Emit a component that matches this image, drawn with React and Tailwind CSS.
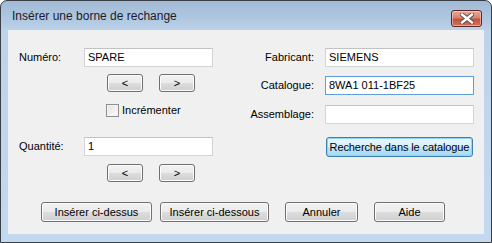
import React from "react";

const font = { fontFamily: '"Liberation Sans", Arial, sans-serif' };

function Btn({ w, h = 20, children, className = "" }) {
  return (
    <div
      className={`flex items-center justify-center rounded-[3px] border border-[#707070] bg-[linear-gradient(to_bottom,#f2f2f2_0%,#ebebeb_50%,#dddddd_51%,#cfcfcf_100%)] text-[11px] text-black shadow-[inset_0_0_0_1px_#fcfcfc] ${w} ${h === 18 ? "h-[18px]" : "h-[20px]"} ${className}`}
    >
      {children}
    </div>
  );
}

function Input({ value, blue }) {
  return (
    <div
      className={`flex h-[19px] items-center border bg-white pl-[3px] text-[11px] text-black ${
        blue ? "border-[#5e9fdc]" : "border-[#d4d4d4] border-t-[#c2c2c2]"
      }`}
    >
      {value}
    </div>
  );
}

export default function App() {
  return (
    <div className="h-[243px] w-[492px] bg-white" style={font}>
      <div className="flex h-[243px] w-[492px] flex-col rounded-t-[7px] border border-[#3a3f46] bg-[linear-gradient(to_bottom,#a2bad5_0px,#b2c9e2_20px,#bcd3ea_30px,#c3d9ef_100%)]">
        {/* title bar */}
        <div className="flex h-[29px] items-start justify-between pl-[11px] pr-[9px]">
          <div
            className="pt-[8px] text-[12px] leading-[15px] text-[#1b1b2b]"
            style={{ fontFamily: '"Liberation Sans", Arial, sans-serif' }}
          >
            Insérer une borne de rechange
          </div>
          <div className="mt-[9px] flex h-[17px] w-[31px] items-center justify-center rounded-[3px] border border-[#5a2a26] bg-[linear-gradient(to_bottom,#e9a99b_0%,#d88270_45%,#c5513c_55%,#d2735c_100%)] shadow-[inset_0_0_0_1px_rgba(255,220,210,0.5)]">
            <svg width="14" height="11" viewBox="0 0 14 11">
              <path
                d="M2 1.5 L12 9.5 M12 1.5 L2 9.5"
                stroke="#4a4a4a"
                strokeWidth="4.2"
                strokeLinecap="square"
              />
              <path
                d="M2 1.5 L12 9.5 M12 1.5 L2 9.5"
                stroke="#ffffff"
                strokeWidth="2.4"
                strokeLinecap="square"
              />
            </svg>
          </div>
        </div>
        {/* client */}
        <div className="mx-[7px] flex h-[204px] flex-col bg-[#f0f0f0] pt-[18px]">
          <div className="flex items-start">
            {/* left column */}
            <div className="flex w-[240px] flex-col pl-[11px]">
              <div className="flex items-center">
                <div className="w-[65px] text-[11px] text-black">Numéro:</div>
                <div className="w-[129px]">
                  <Input value="SPARE" />
                </div>
              </div>
              <div className="ml-[88px] mt-[7px] flex gap-[16px]">
                <Btn w="w-[36px]" h={18}>&lt;</Btn>
                <Btn w="w-[36px]" h={18}>&gt;</Btn>
              </div>
              <div className="ml-[87px] mt-[12px] flex h-[13px] items-center gap-[3px]">
                <div className="h-[13px] w-[13px] border border-[#8f8f8f] bg-[linear-gradient(to_bottom_right,#e4e4e4,#fbfbfb)] shadow-[inset_0_0_0_1px_#f4f4f4]" />
                <div className="text-[11px] text-black">Incrémenter</div>
              </div>
              <div className="mt-[20px] flex items-center">
                <div className="w-[65px] text-[11px] text-black">Quantité:</div>
                <div className="w-[129px]">
                  <Input value="1" />
                </div>
              </div>
              <div className="ml-[88px] mt-[8px] flex gap-[16px]">
                <Btn w="w-[36px]" h={18}>&lt;</Btn>
                <Btn w="w-[36px]" h={18}>&gt;</Btn>
              </div>
            </div>
            {/* right column */}
            <div className="flex flex-col">
              <div className="flex items-center">
                <div className="w-[66px] text-right text-[11px] text-black">Fabricant:</div>
                <div className="ml-[11px] w-[149px]">
                  <Input value="SIEMENS" />
                </div>
              </div>
              <div className="mt-[9px] flex items-center">
                <div className="w-[66px] text-right text-[11px] text-black">Catalogue:</div>
                <div className="ml-[11px] w-[149px]">
                  <Input value="8WA1 011-1BF25" blue />
                </div>
              </div>
              <div className="mt-[10px] flex items-center">
                <div className="w-[66px] text-right text-[11px] text-black">Assemblage:</div>
                <div className="ml-[11px] w-[149px]">
                  <Input value="" />
                </div>
              </div>
              <div className="ml-[78px] mt-[13px] flex h-[20px] w-[147px] items-center justify-center rounded-[3px] border border-[#3c7fb1] bg-[linear-gradient(to_bottom,#eaf6fd_0%,#d9f0fc_50%,#bee6fd_51%,#a7d9f5_100%)] text-[11px] tracking-[-0.1px] text-black shadow-[inset_0_0_0_1px_#8ed4f6]">
                Recherche dans le catalogue
              </div>
            </div>
          </div>
          <div className="ml-[33px] mt-[20px] flex">
            <Btn w="w-[111px]">Insérer ci-dessus</Btn>
            <Btn w="w-[109px]" className="ml-[8px]">Insérer ci-dessous</Btn>
            <Btn w="w-[73px]" className="ml-[16px]">Annuler</Btn>
            <Btn w="w-[71px]" className="ml-[16px]">Aide</Btn>
          </div>
        </div>
      </div>
    </div>
  );
}
